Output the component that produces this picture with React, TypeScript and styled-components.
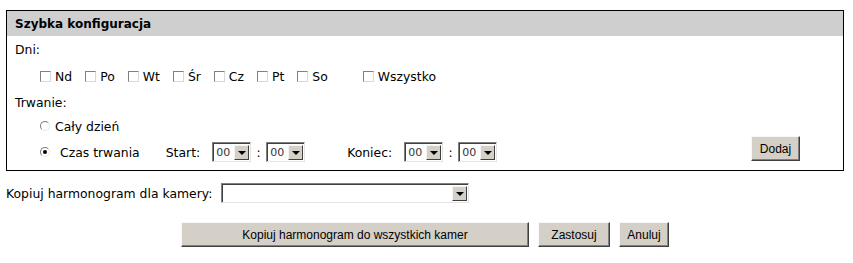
import React from 'react';
import styled, { createGlobalStyle } from 'styled-components';

const GlobalStyle = createGlobalStyle`
  body {
    margin: 0;
    background: #fff;
    color: #000;
    font-family: "DejaVu Sans", Verdana, sans-serif;
    font-size: 12.4px;
  }
`;

const days = ['Nd', 'Po', 'Wt', 'Śr', 'Cz', 'Pt', 'So'];

const App: React.FC = () => {
  return (
    <>
      <GlobalStyle />
      <Page>
        <Panel>
          <PanelHeader>Szybka konfiguracja</PanelHeader>
          <PanelBody>
            <Row $h={26}>Dni:</Row>
            <Row $h={28} $indent={25}>
              {days.map((d) => (
                <CheckItem key={d}>
                  <Check type="checkbox" />
                  {d}
                </CheckItem>
              ))}
              <CheckItem $wide>
                <Check type="checkbox" />
                Wszystko
              </CheckItem>
            </Row>
            <Row $h={24}>Trwanie:</Row>
            <Row $h={24} $indent={25}>
              <RadioLabel $gap={5}>
                <Radio type="radio" name="dur" />
                Cały dzień
              </RadioLabel>
            </Row>
            <Row $h={28} $indent={25}>
              <RadioLabel $gap={10}>
                <Radio type="radio" name="dur" defaultChecked />
                Czas trwania
              </RadioLabel>
              <FieldLabel $left={26} $right={12}>Start:</FieldLabel>
              <Combo $w={39}>
                <ComboValue>00</ComboValue>
                <ArrowBox />
              </Combo>
              <Colon>:</Colon>
              <Combo $w={39}>
                <ComboValue>00</ComboValue>
                <ArrowBox />
              </Combo>
              <FieldLabel $left={42} $right={12}>Koniec:</FieldLabel>
              <Combo $w={39}>
                <ComboValue>00</ComboValue>
                <ArrowBox />
              </Combo>
              <Colon>:</Colon>
              <Combo $w={39}>
                <ComboValue>00</ComboValue>
                <ArrowBox />
              </Combo>
              <AddButton>Dodaj</AddButton>
            </Row>
          </PanelBody>
        </Panel>

        <CameraRow>
          Kopiuj harmonogram dla kamery:
          <Combo $w={248}>
            <ComboValue />
            <ArrowBox />
          </Combo>
        </CameraRow>

        <ActionRow>
          <Button $w={348}>Kopiuj harmonogram do wszystkich kamer</Button>
          <Button $w={72}>Zastosuj</Button>
          <Button $w={50}>Anuluj</Button>
        </ActionRow>
      </Page>
    </>
  );
};

const Page = styled.div`
  width: 838px;
  padding: 10px 0 0 6px;
`;

const Panel = styled.div`
  border: 1px solid #000;
`;

const PanelHeader = styled.div`
  height: 25px;
  display: flex;
  align-items: center;
  padding-left: 8px;
  background: #cfcfcf;
  font-weight: bold;
  font-size: 12px;
`;

const PanelBody = styled.div`
  padding: 0 43px 4px 8px;
`;

const Row = styled.div<{ $h: number; $indent?: number }>`
  display: flex;
  align-items: center;
  height: ${(p) => p.$h}px;
  padding-left: ${(p) => p.$indent || 0}px;
`;

const CheckItem = styled.label<{ $wide?: boolean }>`
  display: flex;
  align-items: center;
  gap: 4px;
  margin-right: ${(p) => (p.$wide ? 0 : 13)}px;
  margin-left: ${(p) => (p.$wide ? 22 : 0)}px;
`;

const Check = styled.input`
  appearance: none;
  margin: 0;
  width: 11px;
  height: 11px;
  background: #fff;
  border: 1px solid;
  border-color: #808080 #d8d8d8 #d8d8d8 #808080;
`;

const RadioLabel = styled.label<{ $gap: number }>`
  display: flex;
  align-items: center;
  gap: ${(p) => p.$gap}px;
`;

const Radio = styled.input`
  appearance: none;
  margin: 0;
  width: 10px;
  height: 10px;
  border-radius: 50%;
  background: #fff;
  border: 1px solid;
  border-color: #7a7a7a #e6e6e6 #e6e6e6 #7a7a7a;
  display: grid;
  place-items: center;

  &:checked::after {
    content: '';
    width: 4px;
    height: 4px;
    border-radius: 50%;
    background: #000;
  }
`;

const FieldLabel = styled.span<{ $left: number; $right: number }>`
  margin-left: ${(p) => p.$left}px;
  margin-right: ${(p) => p.$right}px;
`;

const Colon = styled.span`
  width: 15px;
  text-align: center;
`;

const Combo = styled.div<{ $w: number }>`
  display: flex;
  align-items: stretch;
  width: ${(p) => p.$w}px;
  height: 20px;
  box-sizing: border-box;
  background: #fff;
  border: 1px solid;
  border-color: #808080 #e4e4e4 #e4e4e4 #808080;
  box-shadow: inset 1px 1px 0 #404040;
  padding: 2px 1px 1px 2px;
`;

const ComboValue = styled.span`
  flex: 1;
  padding-left: 1px;
  font-size: 11px;
  line-height: 15px;
  color: #333;
`;

const ArrowBox = styled.span`
  width: 15px;
  display: flex;
  align-items: center;
  justify-content: center;
  box-sizing: border-box;
  background: #d4d0c8;
  border: 1px solid;
  border-color: #f4f4f4 #404040 #404040 #f4f4f4;

  &::after {
    content: '';
    border-left: 4px solid transparent;
    border-right: 4px solid transparent;
    border-top: 4px solid #000;
    margin-top: 1px;
  }
`;

const Button = styled.button<{ $w: number }>`
  width: ${(p) => p.$w}px;
  height: 25px;
  padding: 0;
  background: #d4d0c8;
  color: #000;
  font-family: "Liberation Sans", Arial, sans-serif;
  font-size: 12px;
  border: 1px solid;
  border-color: #f8f8f8 #404040 #404040 #f8f8f8;
  box-shadow: inset -1px -1px 0 #808080;
`;

const AddButton = styled(Button).attrs({ $w: 49 })`
  margin-left: auto;
  margin-top: -7px;
`;

const CameraRow = styled.div`
  display: flex;
  align-items: center;
  gap: 9px;
  margin-top: 12px;
  height: 20px;
`;

const ActionRow = styled.div`
  display: flex;
  justify-content: center;
  gap: 9px;
  margin-top: 19px;
`;

export default App;
